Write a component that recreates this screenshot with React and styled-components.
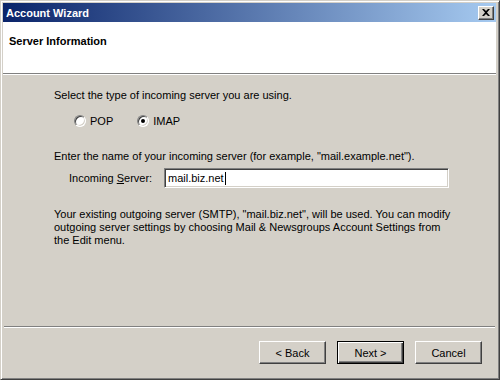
import styled, { createGlobalStyle } from 'styled-components';

const GlobalStyle = createGlobalStyle`
  html, body {
    margin: 0;
    padding: 0;
    background: #d4d0c8;
  }
  body {
    font-family: "Liberation Sans", Arial, sans-serif;
    font-size: 11px;
    color: #000000;
  }
`;

const Window = styled.div`
  box-sizing: border-box;
  width: 500px;
  height: 380px;
  display: flex;
  flex-direction: column;
  background: #d4d0c8;
  border: 1px solid;
  border-color: #d4d0c8 #404040 #404040 #d4d0c8;
  box-shadow: inset 1px 1px #ffffff, inset -1px -1px #808080;
  padding: 2px 3px 3px 2px;
`;

const TitleBar = styled.div`
  height: 19px;
  display: flex;
  align-items: center;
  justify-content: space-between;
  padding: 0 2px 0 3px;
  background: linear-gradient(to right, #0a246a, #a6caf0);
  color: #ffffff;
  font-weight: bold;
  font-size: 11px;
`;

const CloseButton = styled.div`
  box-sizing: border-box;
  width: 16px;
  height: 14px;
  display: flex;
  align-items: center;
  justify-content: center;
  background: #d4d0c8;
  border: 1px solid;
  border-color: #ffffff #404040 #404040 #ffffff;
  box-shadow: inset -1px -1px #808080;
`;

const Header = styled.div`
  height: 52px;
  background: #ffffff;
  padding: 13px 6px 0;
  box-sizing: border-box;
  border-bottom: 1px solid #808080;
  box-shadow: 0 1px #ffffff;
  font-weight: bold;
  font-size: 11px;
`;

const Body = styled.div`
  flex: 1;
  padding: 15px 0 0 51px;
  display: flex;
  flex-direction: column;
`;

const Text = styled.div`
  line-height: 13px;
  margin-bottom: ${(p) => p.$after || 0}px;
  max-width: 400px;
`;

const RadioRow = styled.div`
  display: flex;
  align-items: center;
  padding-left: 20px;
  gap: 24px;
  height: 13px;
  margin-bottom: 23px;
`;

const RadioLabel = styled.label`
  display: flex;
  align-items: center;
  gap: 4px;
`;

const RadioDot = styled.span`
  box-sizing: border-box;
  width: 12px;
  height: 12px;
  border-radius: 50%;
  background: #ffffff;
  border: 1px solid;
  border-color: #808080 #ffffff #ffffff #808080;
  box-shadow: inset 1px 1px #404040, inset -1px -1px #d4d0c8;
  display: flex;
  align-items: center;
  justify-content: center;

  &::after {
    content: '';
    width: 4px;
    height: 4px;
    border-radius: 50%;
    background: ${(p) => (p.$checked ? '#000000' : 'transparent')};
  }
`;

const FieldRow = styled.div`
  display: flex;
  align-items: center;
  padding-left: 15px;
  margin-bottom: 20px;
`;

const FieldLabel = styled.span`
  width: 95px;

  u {
    text-decoration: underline;
  }
`;

const Input = styled.div`
  box-sizing: border-box;
  width: 285px;
  height: 20px;
  background: #ffffff;
  border: 1px solid;
  border-color: #808080 #ffffff #ffffff #808080;
  box-shadow: inset 1px 1px #404040, inset -1px -1px #d4d0c8;
  padding: 0 3px;
  display: flex;
  align-items: center;
`;

const Caret = styled.span`
  display: inline-block;
  width: 1px;
  height: 13px;
  background: #000000;
  margin-left: 1px;
`;

const Separator = styled.div`
  height: 1px;
  background: #808080;
  box-shadow: 0 1px #ffffff;
  margin: 0 1px;
`;

const Footer = styled.div`
  display: flex;
  justify-content: flex-end;
  gap: 11px;
  padding: 14px 14px 12px 0;
`;

const Button = styled.div`
  box-sizing: border-box;
  width: 67px;
  height: 23px;
  display: flex;
  align-items: center;
  justify-content: center;
  background: #d4d0c8;
  border: 1px solid;
  border-color: ${(p) => (p.$default ? '#000000' : '#ffffff #404040 #404040 #ffffff')};
  box-shadow: ${(p) =>
    p.$default
      ? 'inset 1px 1px #ffffff, inset -1px -1px #404040, inset -2px -2px #808080'
      : 'inset -1px -1px #808080'};
`;

export default function App() {
  return (
    <Window>
      <GlobalStyle />
      <TitleBar>
        <span>Account Wizard</span>
        <CloseButton>
          <svg width="8" height="7" viewBox="0 0 8 7">
            <path d="M0 0h2l2 2 2-2h2L5 3.5 8 7H6L4 5 2 7H0l3-3.5z" fill="#000" />
          </svg>
        </CloseButton>
      </TitleBar>
      <Header>Server Information</Header>
      <Body>
        <Text $after={12}>Select the type of incoming server you are using.</Text>
        <RadioRow>
          <RadioLabel>
            <RadioDot />
            POP
          </RadioLabel>
          <RadioLabel>
            <RadioDot $checked />
            IMAP
          </RadioLabel>
        </RadioRow>
        <Text $after={5}>
          Enter the name of your incoming server (for example, "mail.example.net").
        </Text>
        <FieldRow>
          <FieldLabel>
            Incoming <u>S</u>erver:
          </FieldLabel>
          <Input>
            mail.biz.net
            <Caret />
          </Input>
        </FieldRow>
        <Text>
          Your existing outgoing server (SMTP), "mail.biz.net", will be used. You can modify
          outgoing server settings by choosing Mail &amp; Newsgroups Account Settings from
          the Edit menu.
        </Text>
      </Body>
      <Separator />
      <Footer>
        <Button>&lt; Back</Button>
        <Button $default>Next &gt;</Button>
        <Button>Cancel</Button>
      </Footer>
    </Window>
  );
}
